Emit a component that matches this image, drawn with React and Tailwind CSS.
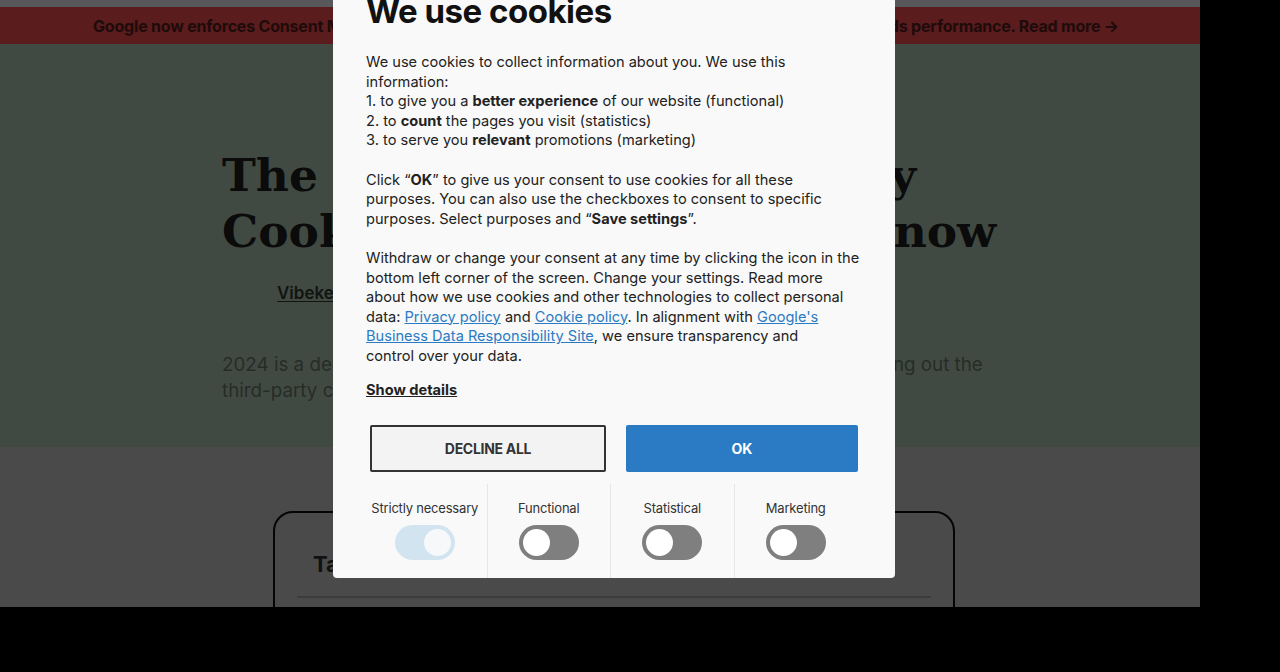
import React from "react";

const sans = { fontFamily: "Inter, 'Noto Sans', sans-serif" };

const Toggle = ({ on, disabled }) => (
  <div
    className={
      "w-[60px] h-[35px] rounded-full p-[4px] flex " +
      (disabled ? "bg-[#d3e4f1] justify-end" : on ? "bg-[#2a7bc4] justify-end" : "bg-[#7f7f7f] justify-start")
    }
  >
    <div className={"w-[27px] h-[27px] rounded-full " + (disabled ? "bg-[#f7f8f9]" : "bg-white")} />
  </div>
);

const purposes = [
  { label: "Strictly necessary", disabled: true },
  { label: "Functional" },
  { label: "Statistical" },
  { label: "Marketing" },
];

const App = () => {
  return (
    <div className="w-[1280px] h-[672px] bg-black overflow-hidden" style={sans}>
      <div className="relative w-[1200px] h-[607px] overflow-hidden flex flex-col">
        {/* top strip */}
        <div className="shrink-0 h-[7px] bg-[#58585a]" />

        {/* banner */}
        <div className="shrink-0 h-[37px] bg-[#5a1c1c] pl-[12px] flex items-center justify-center text-[16px] font-bold text-[#1e0b0b] tracking-[-0.2px] whitespace-nowrap">
          Google now enforces Consent Mode v2 – make sure your setup is compliant and current to protect your ads performance. Read more →
        </div>

        {/* hero */}
        <div className="shrink-0 h-[403px] bg-[#414a42] pl-[222px] pt-[103px]">
          <h1
            className="text-[45.5px] leading-[56px] font-bold text-[#0a0b0a] whitespace-nowrap"
            style={{ fontFamily: "'DejaVu Serif', serif" }}
          >
            The slow end of third-party
            <br />
            Cookies: What to do right now
          </h1>
          <div className="mt-[22px] pl-[55px] flex gap-6 text-[17px] text-[#121412]">
            <span className="font-semibold underline underline-offset-2">Vibeke Nørgaard</span>
            <span className="text-[#3c453d]">12 min read</span>
          </div>
          <p className="mt-[45px] text-[18.8px] leading-[26px] text-[#262c27] whitespace-nowrap">
            2024 is a decisive year for digital advertising, as Google is now finally phasing out the
            <br />
            third-party cookies in Chrome. Is your business ready for a cookieless era?
          </p>
        </div>

        {/* lower section */}
        <div className="flex-1 bg-[#4a4a4a] pt-[64px] pl-[273px]">
          <div className="w-[682px] h-[140px] border-2 border-[#050505] rounded-[20px] px-[22px] pt-[35px]">
            <div className="pl-[16px] text-[22px] font-bold text-[#111]">Table of contents</div>
            <div className="mt-[15px] h-[2px] bg-[#3c3c3c]" />
          </div>
        </div>

        {/* overlay dialog */}
        <div className="absolute left-[333px] top-[-9px] w-[562px] bg-[#f9f9f9] rounded-b-[4px] px-[33px] text-[#222]">
          <h2 className="text-[33px] leading-[40px] font-bold tracking-[-0.5px] text-[#111]">We use cookies</h2>

          <div className="mt-[22px] text-[14.6px] leading-[19.6px] space-y-[19.6px]">
            <p>
              We use cookies to collect information about you. We use this information:
              <br />
              1. to give you a <b>better experience</b> of our website (functional)
              <br />
              2. to <b>count</b> the pages you visit (statistics)
              <br />
              3. to serve you <b>relevant</b> promotions (marketing)
            </p>
            <p>
              Click “<b>OK</b>” to give us your consent to use cookies for all these purposes. You can also use the
              checkboxes to consent to specific purposes. Select purposes and “<b>Save settings</b>”.
            </p>
            <p>
              Withdraw or change your consent at any time by clicking the icon in the bottom left corner of the screen.
              Change your settings. Read more about how we use cookies and other technologies to collect personal data:{" "}
              <a className="text-[#2a7bc4] underline">Privacy policy</a> and{" "}
              <a className="text-[#2a7bc4] underline">Cookie policy</a>. In alignment with{" "}
              <a className="text-[#2a7bc4] underline">Google's Business Data Responsibility Site</a>, we ensure
              transparency and
              <br />
              control over your data.
            </p>
          </div>

          <div className="mt-[14px] text-[14.6px] leading-[19.6px] font-bold underline">Show details</div>

          <div className="mt-[25px] px-[4px] flex gap-[20px]">
            <button className="flex-1 h-[47px] border-2 border-[#333] bg-[#f3f3f3] rounded-[2px] text-[14px] font-bold text-[#333] tracking-[-0.3px]">
              DECLINE ALL
            </button>
            <button className="flex-1 h-[47px] bg-[#2a7bc4] rounded-[2px] text-[14px] font-bold text-white">OK</button>
          </div>

          <div className="mt-[12px] ml-[-3px] w-[494px] grid grid-cols-4">
            {purposes.map((p, i) => (
              <div
                key={p.label}
                className={"flex flex-col items-center pt-[15px] pb-[18px] gap-[8px] " + (i > 0 ? "border-l border-[#e6e6e6]" : "")}
              >
                <span className="text-[13px] leading-[18px] text-[#333] tracking-[-0.2px]">{p.label}</span>
                <Toggle disabled={p.disabled} />
              </div>
            ))}
          </div>
        </div>
      </div>
    </div>
  );
};

export default App;
